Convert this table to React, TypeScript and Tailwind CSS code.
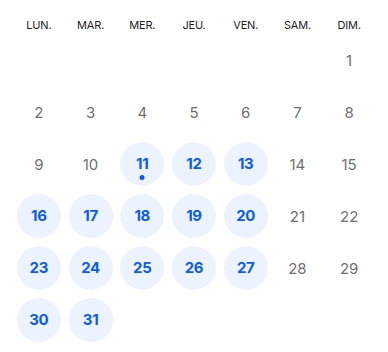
const days = ["LUN.", "MAR.", "MER.", "JEU.", "VEN.", "SAM.", "DIM."];

const available = new Set([11, 12, 13, 16, 17, 18, 19, 20, 23, 24, 25, 26, 27, 30, 31]);
const today = 11;

export default function App() {
  const cells: (number | null)[] = [null, null, null, null, null, null];
  for (let d = 1; d <= 31; d++) cells.push(d);

  return (
    <div
      className="w-[388px] h-[352px] bg-white px-[13px] pt-[17px]"
      style={{ fontFamily: "Inter, 'Liberation Sans', sans-serif" }}
    >
      <div className="grid grid-cols-7">
        {days.map((d) => (
          <div key={d} className="h-4 flex items-center justify-center text-[11px] text-[#1c1c28] tracking-[-0.2px]">
            {d}
          </div>
        ))}
      </div>

      <div className="mt-[5px] grid grid-cols-7 gap-y-2">
        {cells.map((d, i) => (
          <div key={i} className="h-11 flex items-center justify-center">
            {d !== null &&
              (available.has(d) ? (
                <button className="relative w-11 h-11 rounded-full bg-[#edf3fe] flex items-center justify-center text-[15px] font-bold text-[#0b5ce6] tracking-[-0.3px]">
                  {d}
                  {d === today && (
                    <span className="absolute left-1/2 top-[33px] -translate-x-1/2 w-[5px] h-[5px] rounded-full bg-[#0b5ce6]" />
                  )}
                </button>
              ) : (
                <span className="pt-[2px] text-[15px] text-[#6f6f6f]">{d}</span>
              ))}
          </div>
        ))}
      </div>
    </div>
  );
}
